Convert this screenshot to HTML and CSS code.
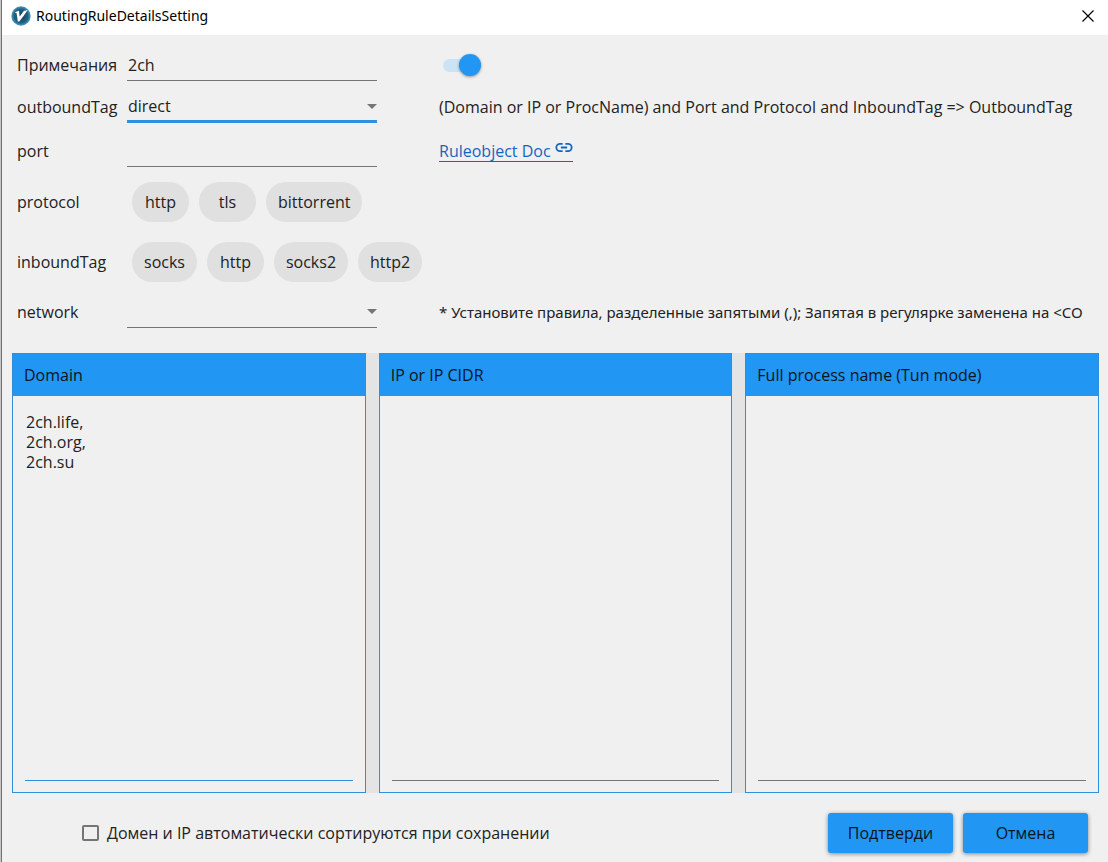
FILE: index.html
```
<!DOCTYPE html>
<html lang="ru">
<head>
    <meta charset="UTF-8">
    <meta name="viewport" content="width=device-width, initial-scale=1.0">
    <title>RoutingRuleDetailsSetting</title>
    <link rel="stylesheet" href="styles.css">
</head>
<body>
    <div class="window">
        <!-- Title bar -->
        <header class="title-bar">
            <svg class="app-icon" viewBox="0 0 20 20" aria-hidden="true">
                <defs>
                    <radialGradient id="ball" cx="50%" cy="50%" r="50%">
                        <stop offset="0" stop-color="#153f5a"/>
                        <stop offset="0.7" stop-color="#1f6185"/>
                        <stop offset="1" stop-color="#4a9cc0"/>
                    </radialGradient>
                </defs>
                <circle cx="10" cy="10" r="9.7" fill="url(#ball)"/>
                <path d="M3.8 6.2 L8 4.8 L8.6 10.6 C10.2 8.6 11.6 6.6 12.8 5 L16.6 4 C14 8.2 11.2 11.8 8.2 15.4 L6.8 15.4 L5.6 7.2 Z" fill="#fff"/>
            </svg>
            <span class="title">RoutingRuleDetailsSetting</span>
            <button class="close-btn" type="button" aria-label="Close">
                <svg viewBox="0 0 12 12"><path d="M0.5 0.5 L11.5 11.5 M11.5 0.5 L0.5 11.5" stroke="#000" stroke-width="1.2"/></svg>
            </button>
        </header>

        <!-- Rule settings -->
        <form class="settings">
            <label for="remarks">Примечания</label>
            <input class="field" type="text" id="remarks" value="2ch">
            <div class="side">
                <input class="switch" type="checkbox" aria-label="Enabled" checked>
            </div>

            <label for="outbound">outboundTag</label>
            <div class="select-box focused">
                <select class="field" id="outbound">
                    <option selected>direct</option>
                    <option>proxy</option>
                    <option>block</option>
                </select>
            </div>
            <div class="side">(Domain or IP or ProcName) and Port and Protocol and InboundTag =&gt; OutboundTag</div>

            <label for="port">port</label>
            <input class="field" type="text" id="port">
            <div class="side">
                <a class="doc-link" href="#">Ruleobject Doc <svg viewBox="0 0 20 10" aria-hidden="true"><path d="M8.5 1 H5.5 A4 4 0 0 0 5.5 9 H8.5 M11.5 1 H14.5 A4 4 0 0 1 14.5 9 H11.5 M6.5 5 H13.5" fill="none" stroke="currentColor" stroke-width="2"/></svg></a>
            </div>

            <span class="chip-label">protocol</span>
            <div class="chips">
                <button class="chip" type="button">http</button>
                <button class="chip" type="button">tls</button>
                <button class="chip" type="button">bittorrent</button>
            </div>

            <span class="chip-label">inboundTag</span>
            <div class="chips">
                <button class="chip" type="button">socks</button>
                <button class="chip" type="button">http</button>
                <button class="chip" type="button">socks2</button>
                <button class="chip" type="button">http2</button>
            </div>

            <label for="network">network</label>
            <div class="select-box">
                <select class="field" id="network">
                    <option selected></option>
                    <option>tcp</option>
                    <option>udp</option>
                </select>
            </div>
            <div class="side note">* Установите правила, разделенные запятыми (,); Запятая в регулярке заменена на &lt;CO</div>
        </form>

        <!-- Rule lists -->
        <div class="panels">
            <section class="panel active">
                <label class="panel-title" for="domain">Domain</label>
                <textarea id="domain">2ch.life,
2ch.org,
2ch.su</textarea>
            </section>
            <section class="panel">
                <label class="panel-title" for="ip">IP or IP CIDR</label>
                <textarea id="ip"></textarea>
            </section>
            <section class="panel">
                <label class="panel-title" for="process">Full process name (Tun mode)</label>
                <textarea id="process"></textarea>
            </section>
        </div>

        <!-- Footer -->
        <footer class="footer">
            <label class="check">
                <input type="checkbox">
                Домен и IP автоматически сортируются при сохранении
            </label>
            <div class="actions">
                <button class="btn" type="button">Подтверди</button>
                <button class="btn" type="button">Отмена</button>
            </div>
        </footer>
    </div>
</body>
</html>
```

FILE: styles.css
```
* {
    box-sizing: border-box;
}

body {
    margin: 0;
    padding-left: 1px;
    background: #c4c6c8;
    color: #222;
    font-family: "Open Sans", "Noto Sans", sans-serif;
    font-size: 16px;
    line-height: 20px;
}

button,
input,
select,
textarea {
    margin: 0;
    color: inherit;
    font: inherit;
}

.window {
    display: flex;
    flex-direction: column;
    min-height: 100vh;
    border-left: 1px solid #707070;
    background: #f0f0f0;
}

/* Title bar */
.title-bar {
    display: flex;
    align-items: center;
    gap: 5px;
    height: 35px;
    padding: 0 14px 3px 9px;
    background: #fff;
    color: #000;
    font-family: "Noto Sans", sans-serif;
    font-size: 14px;
}

.app-icon {
    width: 20px;
    height: 20px;
}

.title {
    flex: 1;
}

.close-btn {
    display: flex;
    padding: 0;
    border: none;
    background: none;
}

.close-btn svg {
    width: 12px;
    height: 12px;
}

/* Settings form */
.settings {
    display: grid;
    grid-template-columns: 110px 250px minmax(0, 1fr);
    grid-template-rows: 46px 42px 44px 70px 50px 41px;
    align-items: end;
    padding: 0 9px 0 15px;
}

.settings > label {
    height: 32px;
    padding-top: 6px;
    white-space: nowrap;
}

.side {
    display: flex;
    align-items: center;
    height: 32px;
    padding-left: 62px;
    white-space: nowrap;
}

.note {
    font-family: "Noto Sans", sans-serif;
    font-size: 15px;
}

.field {
    width: 100%;
    height: 32px;
    padding: 0 1px;
    border: none;
    border-bottom: 1px solid #757575;
    border-radius: 0;
    outline: none;
    background: none;
    appearance: none;
}

.select-box {
    position: relative;
    height: 32px;
}

.select-box::after {
    content: "";
    position: absolute;
    top: 13px;
    right: 0;
    border: 5px solid transparent;
    border-top-color: #757575;
    border-bottom: none;
    pointer-events: none;
}

.focused .field {
    border-bottom: 3px solid #2f8fe0;
}

.switch {
    display: flex;
    align-items: center;
    width: 38px;
    height: 13px;
    margin-left: 4px;
    border-radius: 7px;
    background: #cbe4f5;
    appearance: none;
}

.switch::before {
    content: "";
    width: 22px;
    height: 22px;
    border-radius: 50%;
    background: #2196f3;
    box-shadow: 0 1px 3px rgba(0, 0, 0, 0.4);
}

.switch:checked::before {
    margin-left: 16px;
}

.doc-link {
    border-bottom: 1px solid #1565c0;
    color: #1565c0;
    text-decoration: none;
}

.doc-link svg {
    width: 18px;
    height: 9px;
    vertical-align: 5px;
}

.chip-label,
.chips {
    align-self: center;
}

.chips {
    display: flex;
    grid-column: 2 / 4;
    gap: 10px;
    padding-left: 5px;
}

.chip {
    min-width: 57px;
    height: 40px;
    padding: 0 12px;
    border: none;
    border-radius: 20px;
    background: #e0e0e0;
}

/* Panels */
.panels {
    display: grid;
    flex: 1;
    grid-template-columns: repeat(3, 1fr);
    gap: 13px;
    margin: 25px 9px 0 10px;
    background: #e4e4e4;
}

.panel {
    display: flex;
    flex-direction: column;
    border: 1px solid #2f8fdc;
    background: #f0f0f0;
}

.panel-title {
    padding: 11px;
    background: #2196f3;
    color: #0a1520;
}

.panel textarea {
    flex: 1;
    margin: 12px 12px 11px;
    padding: 4px 1px;
    border: none;
    border-bottom: 1px solid #757575;
    outline: none;
    background: none;
    resize: none;
}

.panel.active textarea {
    border-bottom: 1px solid #2f8fdc;
}

/* Footer */
.footer {
    display: flex;
    align-items: center;
    justify-content: space-between;
    height: 69px;
    padding: 10px 20px 0 80px;
}

.footer .check {
    display: flex;
    align-items: center;
    gap: 8px;
}

.check input {
    width: 17px;
    height: 16px;
    border: 2px solid #757575;
    border-radius: 2px;
    appearance: none;
}

.actions {
    display: flex;
    gap: 10px;
}

.btn {
    width: 125px;
    height: 40px;
    border: none;
    border-radius: 3px;
    background: #2196f3;
    box-shadow: 0 1px 4px rgba(0, 0, 0, 0.45);
    color: #0a1520;
}
```
